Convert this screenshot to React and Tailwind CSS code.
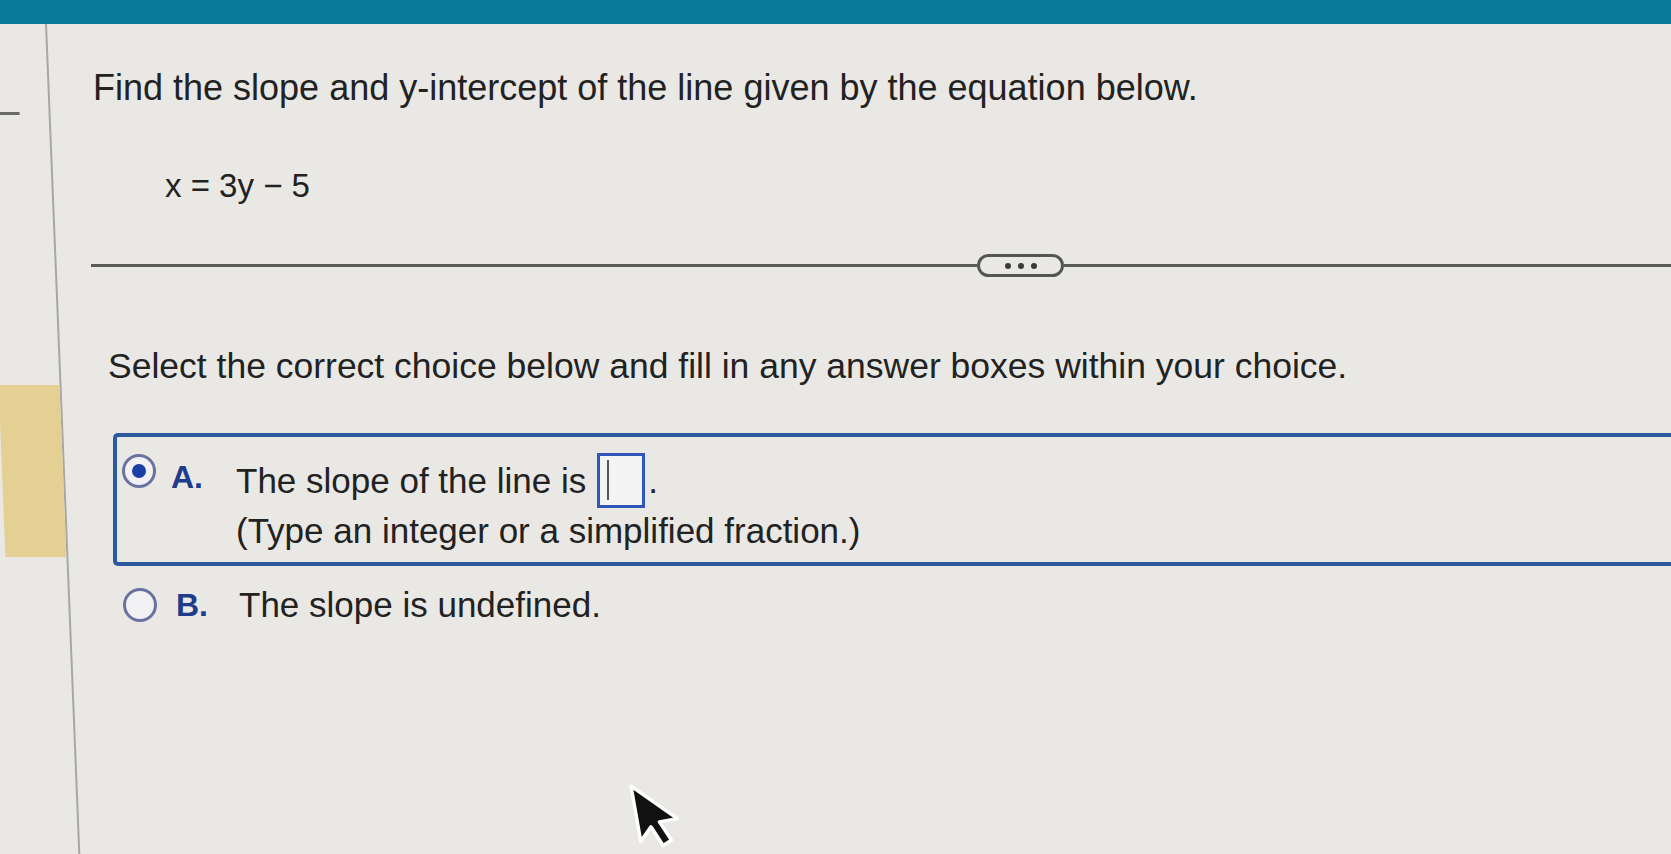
import React from 'react'

const font = { fontFamily: '"Liberation Sans", Arial, sans-serif' }

function Radio({ checked }) {
  return (
    <div className="w-[34px] h-[34px] shrink-0 rounded-full border-[3px] border-[#6a72a0] bg-[#f1f1f3] flex items-center justify-center">
      {checked && <div className="w-[14px] h-[14px] rounded-full bg-[#1c3fa6]" />}
    </div>
  )
}

function Cursor() {
  return (
    <svg
      className="absolute left-[580px] top-[759px] -rotate-[10deg] origin-top-left"
      width="48"
      height="74"
      viewBox="0 0 21 32"
    >
      <path
        d="M1.5 1.5 L1.5 26 L7 20.5 L10.8 29.5 L14.8 27.8 L11 19 L19 19 Z"
        fill="#111"
        stroke="#fff"
        strokeWidth="1.5"
        strokeLinejoin="round"
      />
    </svg>
  )
}

export default function App() {
  return (
    <div className="relative w-[1671px] h-[854px] overflow-hidden bg-[#e9e8e4] text-[#222] flex flex-col" style={font}>
      <div className="h-[24px] shrink-0 bg-[#0b7b9c]" />

      <div className="flex flex-1">
        {/* left strip */}
        <div className="w-[47px] shrink-0 border-r-2 border-[#a7a7a5] skew-x-[2.3deg] origin-top-left">
          <div className="mt-[88px] -ml-[4px] w-[20px] h-[3px] bg-[#6a6a6a]" />
          <div className="mt-[270px] -ml-[16px] h-[172px] bg-[#e4d093]" />
        </div>

        {/* main */}
        <div className="relative flex-1 flex flex-col">
          <div className="mt-[46px] ml-[46px] text-[36px] leading-none whitespace-nowrap">
            Find the slope and y-intercept of the line given by the equation below.
          </div>

          <div className="mt-[63px] ml-[118px] text-[33px] leading-none whitespace-nowrap">
            x = 3y − 5
          </div>

          <div className="mt-[52px] ml-[44px] flex items-center">
            <div className="w-[886px] h-[3px] bg-[#5b5b5b]" />
            <div className="w-[87px] h-[23px] shrink-0 rounded-full border-[3px] border-[#555] flex items-center justify-center gap-[7px]">
              <span className="w-[6px] h-[6px] rounded-full bg-[#3a3a3a]" />
              <span className="w-[6px] h-[6px] rounded-full bg-[#3a3a3a]" />
              <span className="w-[6px] h-[6px] rounded-full bg-[#3a3a3a]" />
            </div>
            <div className="flex-1 h-[3px] bg-[#5b5b5b]" />
          </div>

          <div className="mt-[72px] ml-[61px] text-[35.5px] leading-none whitespace-nowrap">
            Select the correct choice below and fill in any answer boxes within your choice.
          </div>

          {/* choice A */}
          <div className="mt-[48px] ml-[66px] h-[133px] border-4 border-r-0 border-[#2d5a9e] rounded-l-[5px] flex items-start pl-[5px] pt-[16px]">
            <div className="mt-[1px]">
              <Radio checked />
            </div>
            <div className="ml-[15px] mt-[8px] text-[32px] leading-none font-bold text-[#1f3b8c]">A.</div>
            <div className="ml-[33px] flex flex-col">
              <div className="flex items-center h-[55px]">
                <span className="text-[35px] leading-none whitespace-nowrap">The slope of the line is</span>
                <div className="ml-[11px] w-[48px] h-[55px] border-[3px] border-[#2f56b8] bg-[#f4f4f4] flex items-center pl-[7px]">
                  <div className="w-[2px] h-[40px] bg-[#555]" />
                </div>
                <span className="ml-[3px] text-[35px] leading-none">.</span>
              </div>
              <div className="mt-[5px] text-[35px] leading-none whitespace-nowrap">
                (Type an integer or a simplified fraction.)
              </div>
            </div>
          </div>

          {/* choice B */}
          <div className="mt-[22px] ml-[76px] flex items-center h-[34px]">
            <Radio />
            <div className="ml-[19px] text-[32px] leading-none font-bold text-[#1f3b8c]">B.</div>
            <div className="ml-[31px] text-[35px] leading-none whitespace-nowrap">The slope is undefined.</div>
          </div>

          <Cursor />
        </div>
      </div>
    </div>
  )
}
